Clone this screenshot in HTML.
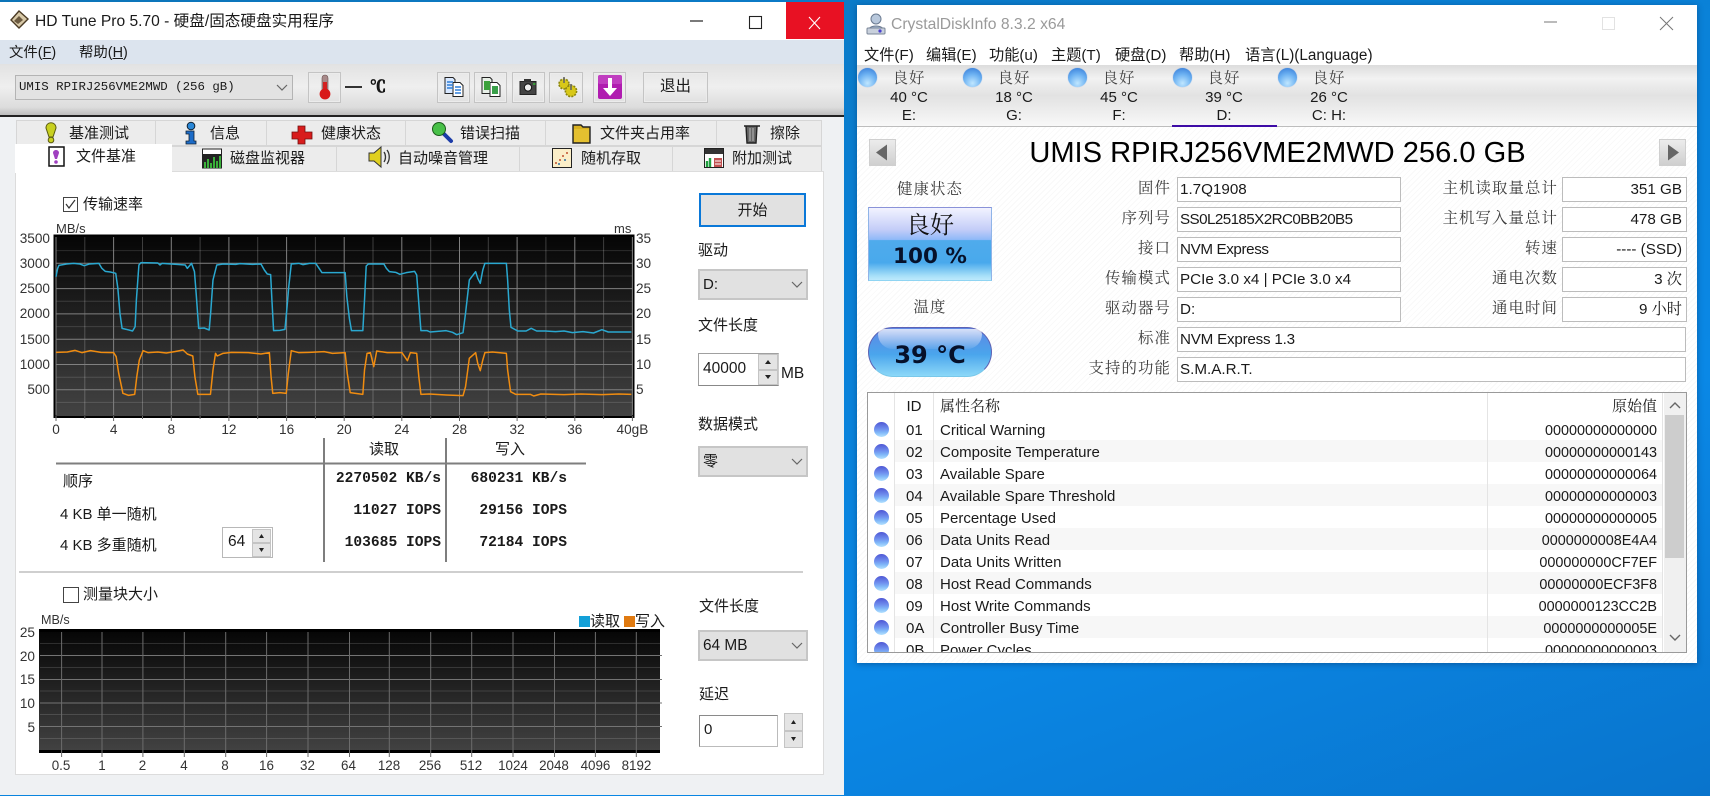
<!DOCTYPE html>
<html lang="zh"><head><meta charset="utf-8"><title>HD Tune Pro / CrystalDiskInfo</title>
<style>
html,body{margin:0;padding:0;width:1710px;height:796px;overflow:hidden}
body{position:relative;background:linear-gradient(160deg,#0c74b8 0%,#0a7fd2 35%,#0a88e6 70%,#0974cc 100%);font-family:"Liberation Sans","Noto Sans CJK SC",sans-serif;font-size:15px;color:#1a1a1a}
div,span.a,svg{position:absolute}
.t{position:absolute;white-space:nowrap;line-height:20px}
.c{position:absolute;white-space:nowrap;line-height:20px;text-align:center}
.r{position:absolute;white-space:nowrap;line-height:20px;text-align:right}
.m{font-family:"Liberation Mono",monospace;font-weight:bold;font-size:14.6px}
.s{font-family:"Liberation Sans","Noto Serif CJK SC",serif}
.tb{background:#ececec;border:1px solid #d6d6d6;box-sizing:border-box}
.bt{border:1px solid #c4c4c4;box-shadow:inset 0 0 0 1px #ececec;box-sizing:border-box}
.cb{background:#e1e1e1;border:2px solid #c6c6c6;box-sizing:border-box}
.sb{background:#e4e4e4;border:1px solid #c4c4c4;box-sizing:border-box}
.fb{background:#fff;border:1px solid #bcbcbc;box-sizing:border-box;height:25px}
.lb{color:#3c3c3c;letter-spacing:1.1px;font-size:15.4px}
.orb{width:19px;height:19px;border-radius:50%;background:radial-gradient(circle at 50% 80%,#bfe6ff 0,#6db2f2 50%,#2f74d4 100%);box-shadow:0 0 1px #7aa8e0}
.lo{left:874px;width:15px;height:15px;border-radius:50%;background:linear-gradient(#4f57d4,#6f8eee 45%,#7fb6f8 70%,#b4e2ff)}
.alt{left:894px;width:768px;height:22px;background:#f7f7f7}
</style></head><body>

<!-- HD Tune window -->
<div style="left:0;top:2px;width:844px;height:793px;background:#eff1f3"></div>
<div style="left:0;top:2px;width:844px;height:38px;background:#fff"></div>
<div style="left:786px;top:2px;width:58px;height:37px;background:#e81123"></div>
<svg style="left:0;top:0" width="860" height="60">
<path d="M19 11l9 8-9 9-8-8z" fill="#d8c9a8" stroke="#4a3a24" stroke-width="1.4"/><path d="M14 21l5-5 4 4-5 4z" fill="#6b5a40"/>
<path d="M690 21h13" stroke="#222" stroke-width="1.2"/>
<rect x="749.5" y="16.5" width="12" height="12" fill="none" stroke="#222" stroke-width="1.1"/>
<path d="M809 17l11 12M820 17l-11 12" stroke="#fff" stroke-width="1.1"/>
</svg>
<div class="t" style="left:35px;top:12px;font-size:15.6px">HD Tune Pro 5.70 - 硬盘/固态硬盘实用程序</div>
<div style="left:0;top:40px;width:844px;height:24px;background:#dce4ee"></div>
<div class="t" style="left:9px;top:43px;font-size:14.4px">文件(<u>F</u>)</div>
<div class="t" style="left:79px;top:43px;font-size:14.4px">帮助(<u>H</u>)</div>
<div style="left:0;top:64px;width:844px;height:51px;background:linear-gradient(#e2e2e2,#efefef 45%,#dcdcdc 85%,#bdbdbd)"></div>
<div style="left:0;top:115px;width:844px;height:1.5px;background:#222"></div>

<div style="left:15px;top:75px;width:278px;height:25px;background:#e2e2e2;border:1px solid #b4b4b4;box-sizing:border-box"></div>
<div class="t" style="left:19px;top:77px;font-family:'Liberation Mono',monospace;font-size:12.4px">UMIS RPIRJ256VME2MWD (256 gB)</div>
<svg style="left:276px;top:84px" width="12" height="8"><path d="M1 1l5 5 5-5" fill="none" stroke="#666" stroke-width="1.2"/></svg>

<div class="bt" style="left:308px;top:72px;width:33px;height:31px"></div>
<svg style="left:316px;top:73px" width="18" height="28"><rect x="6" y="2" width="6" height="18" rx="3" fill="#a88a8a" stroke="#6a5050" stroke-width=".6"/><rect x="7" y="9" width="4" height="12" fill="#d42020"/><circle cx="9" cy="21" r="5.4" fill="#d81818"/></svg>
<div style="left:345px;top:86px;width:17px;height:2px;background:#333"></div>
<div class="t" style="left:370px;top:76px;font-weight:bold;font-size:16px;font-family:'Noto Serif CJK SC',serif;-webkit-text-stroke:.7px #111">℃</div>

<div class="bt" style="left:437px;top:72px;width:33px;height:31px"></div>
<div class="bt" style="left:474px;top:72px;width:33px;height:31px"></div>
<div class="bt" style="left:512px;top:72px;width:33px;height:31px"></div>
<div class="bt" style="left:549px;top:72px;width:34px;height:31px"></div>
<div class="bt" style="left:593px;top:72px;width:33px;height:31px"></div>
<div class="bt" style="left:643px;top:72px;width:65px;height:31px"></div>
<div class="c" style="left:643px;top:77px;width:65px;font-size:15.5px">退出</div>
<svg style="left:436px;top:72px" width="200" height="32">
<g stroke="#222" stroke-width="1">
<path d="M9 5.5h8l2 2v14H9z" fill="#d8e8ff"/><path d="M17 10.5h7l3 3v11H17z" fill="#fff"/>
<path d="M11 10h6M11 13h6M11 16h6M19 15h6M19 18h6M19 21h6" stroke="#2f7fd8" stroke-width="1.5"/>
<path d="M46 5.5h8l2 2v14H46z" fill="#e8f0e8"/><path d="M54 10.5h7l3 3v11H54z" fill="#fff"/>
<rect x="48" y="9" width="6" height="9" fill="#3aa03a" stroke="none"/><rect x="56" y="14" width="6" height="8" fill="#3aa04a" stroke="none"/>
</g>
<path d="M84 9.5h16v13H84z" fill="#444" stroke="#222"/><rect x="88" y="7" width="7" height="3" fill="#333"/><circle cx="92" cy="15.5" r="3.6" fill="#eee" stroke="#111"/><rect x="97" y="11" width="2.5" height="2" fill="#3a9a3a"/>
<g fill="#d8c818" stroke="#8a8410" stroke-width="1.6" stroke-dasharray="2 1.2"><circle cx="128" cy="12" r="5"/><circle cx="135" cy="19" r="5.6"/></g><path d="M128 5v6M135 12v6" stroke="#666" stroke-width="1.6"/>
<rect x="162" y="3" width="24" height="24" rx="2" fill="#b01cb0"/><rect x="162" y="3" width="24" height="9" rx="2" fill="#cc55cc" opacity=".6"/><path d="M172 6h4v10h5l-7 8-7-8h5z" fill="#fff"/>
</svg>

<!-- tabs -->
<div class="tb" style="left:16px;top:120px;width:140px;height:26px"></div>
<div class="tb" style="left:155px;top:120px;width:112px;height:26px"></div>
<div class="tb" style="left:266px;top:120px;width:140px;height:26px"></div>
<div class="tb" style="left:405px;top:120px;width:141px;height:26px"></div>
<div class="tb" style="left:545px;top:120px;width:172px;height:26px"></div>
<div class="tb" style="left:716px;top:120px;width:106px;height:26px"></div>
<div class="tb" style="left:171px;top:146px;width:166px;height:26px"></div>
<div class="tb" style="left:336px;top:146px;width:184px;height:26px"></div>
<div class="tb" style="left:519px;top:146px;width:154px;height:26px"></div>
<div class="tb" style="left:672px;top:146px;width:150px;height:26px"></div>
<div style="left:15px;top:171px;width:809px;height:604px;background:#fff;border:1px solid #dcdcdc;box-sizing:border-box"></div>
<div style="left:15px;top:144px;width:157px;height:29px;background:#fff"></div>

<div class="t" style="left:69px;top:124px">基准测试</div>
<div class="t" style="left:210px;top:124px">信息</div>
<div class="t" style="left:321px;top:124px">健康状态</div>
<div class="t" style="left:460px;top:124px">错误扫描</div>
<div class="t" style="left:600px;top:124px">文件夹占用率</div>
<div class="t" style="left:770px;top:124px">擦除</div>
<div class="t" style="left:76px;top:147px">文件基准</div>
<div class="t" style="left:230px;top:149px">磁盘监视器</div>
<div class="t" style="left:398px;top:149px">自动噪音管理</div>
<div class="t" style="left:581px;top:149px">随机存取</div>
<div class="t" style="left:732px;top:149px">附加测试</div>

<svg style="left:0;top:116px" width="844" height="56">
<!-- bang -->
<path d="M46 12c0-7 10-7 10 0l-3 9h-4z" fill="#c8d020" stroke="#5a5a10"/><circle cx="51" cy="24" r="2.8" fill="#c8d020" stroke="#5a5a10"/>
<!-- i -->
<circle cx="191" cy="10" r="3.8" fill="#2a88d8" stroke="#123"/><path d="M186 15h8v10h2v3h-10v-3h3v-7h-3z" fill="#1c6cc8" stroke="#123" stroke-width=".8"/>
<!-- cross -->
<path d="M298 10h7v6h7v7h-7v5h-7v-5h-6v-7h6z" fill="#d81c1c" stroke="#701010" stroke-width=".8"/>
<!-- magnifier -->
<path d="M444 18l7 7" stroke="#1c3ca8" stroke-width="4" stroke-linecap="round"/><circle cx="439" cy="13" r="6.5" fill="#48c048" stroke="#1a5a1a"/>
<!-- folder -->
<path d="M573 12v-3h8l2 2h7v16h-17z" fill="#d8b020" stroke="#222" stroke-width="1.4"/><path d="M574 13h15v13h-15z" fill="#e4c030"/>
<!-- trash -->
<path d="M744 10h16M746 10l1 17h9l1-17" fill="#666" stroke="#222" stroke-width="1.4"/><path d="M750 12v13M753 12v13" stroke="#bbb"/>
<!-- active -->
<rect x="49" y="31" width="15" height="19" fill="#fff" stroke="#111" stroke-width="1.5"/><path d="M53 37c0-4 6-4 6 0l-2 6h-2z" fill="#a040c0"/><circle cx="56" cy="46" r="1.8" fill="#a040c0"/>
<!-- chart -->
<rect x="202.5" y="33" width="19" height="19" fill="#fff" stroke="#222"/><rect x="203" y="38" width="18" height="14" fill="#222"/><path d="M205 52v-6M208 52v-9M211 52v-5M214 52v-11M217 52v-7M220 52v-12" stroke="#3ab03a" stroke-width="2"/>
<!-- speaker -->
<path d="M369 37h5l7-6v20l-7-6h-5z" fill="#e0d020" stroke="#333"/><path d="M384 36c2 3 2 7 0 10M387 34c3 4 3 10 0 14" stroke="#333" stroke-width="1.3" fill="none"/>
<!-- random -->
<rect x="552.5" y="32.5" width="19" height="19" fill="#fbeec8" stroke="#222"/><g fill="#c05030"><circle cx="556" cy="47" r="1"/><circle cx="560" cy="44" r="1"/><circle cx="563" cy="40" r="1"/><circle cx="567" cy="37" r="1"/></g><g fill="#3070a0"><circle cx="559" cy="48" r="1"/><circle cx="565" cy="44" r="1"/></g>
<!-- additional -->
<rect x="704.5" y="32.5" width="19" height="19" fill="#fff" stroke="#222"/><rect x="705" y="33" width="18" height="5" fill="#333"/><path d="M707 51v-6M710 51v-9" stroke="#20a040" stroke-width="2.4"/><rect x="714" y="42" width="8" height="9" fill="#c05050"/><path d="M715 45h6M715 48h6" stroke="#fff"/>
</svg>

<!-- benchmark upper -->
<div style="left:63px;top:197px;width:15px;height:15px;box-sizing:border-box;background:#fff;border:1px solid #444"></div>
<svg style="left:63px;top:197px" width="15" height="15"><path d="M3 7l3 4 6-8" fill="none" stroke="#333" stroke-width="1.2"/></svg>
<div class="t" style="left:83px;top:195px">传输速率</div>

<svg style="left:0;top:0" width="850" height="796" font-family="Liberation Sans" font-size="13.6" fill="#333">
<defs><linearGradient id="g1" x1="0" y1="0" x2="0" y2="1"><stop offset="0" stop-color="#050505"/><stop offset="1" stop-color="#434343"/></linearGradient></defs>
<rect x="54.5" y="235.5" width="579" height="181.5" fill="url(#g1)" stroke="#000" stroke-width="2"/>
<path d="M56 250.6H633M56 276H633M56 301.2H633M56 326.6H633M56 351.8H633M56 377.2H633M56 402.4H633" stroke="#fff" stroke-opacity=".14"/>
<path d="M84.8 237V415M142.5 237V415M200.1 237V415M257.7 237V415M315.4 237V415M373 237V415M430.7 237V415M488.3 237V415M545.9 237V415M603.6 237V415" stroke="#fff" stroke-opacity=".22"/>
<path d="M56 263.3H633M56 288.6H633M56 313.9H633M56 339.2H633M56 364.5H633M56 389.8H633" stroke="#808080"/>
<path d="M56 237V415M113.6 237V415M171.3 237V415M228.9 237V415M286.6 237V415M344.2 237V415M401.8 237V415M459.5 237V415M517.1 237V415M574.8 237V415M632.4 237V415" stroke="#808080"/>
<path d="M56 416v5M113.6 416v5M171.3 416v5M228.9 416v5M286.6 416v5M344.2 416v5M401.8 416v5M459.5 416v5M517.1 416v5M574.8 416v5M632.4 416v5M84.8 416v3M142.5 416v3M200.1 416v3M257.7 416v3M315.4 416v3M373 416v3M430.7 416v3M488.3 416v3M545.9 416v3M603.6 416v3" stroke="#666"/>
<g text-anchor="end"><text x="50" y="243">3500</text><text x="50" y="268">3000</text><text x="50" y="293">2500</text><text x="50" y="318">2000</text><text x="50" y="344">1500</text><text x="50" y="369">1000</text><text x="50" y="394">500</text></g>
<g><text x="636" y="243">35</text><text x="636" y="268">30</text><text x="636" y="293">25</text><text x="636" y="318">20</text><text x="636" y="344">15</text><text x="636" y="369">10</text><text x="636" y="394">5</text></g>
<text x="56" y="233" font-size="13">MB/s</text><text x="614" y="233" font-size="13">ms</text>
<g text-anchor="middle"><text x="56" y="434">0</text><text x="113.6" y="434">4</text><text x="171.3" y="434">8</text><text x="228.9" y="434">12</text><text x="286.6" y="434">16</text><text x="344.2" y="434">20</text><text x="401.8" y="434">24</text><text x="459.5" y="434">28</text><text x="517.1" y="434">32</text><text x="574.8" y="434">36</text><text x="632.4" y="434">40gB</text></g>

<!-- chart 2 -->
<rect x="39" y="629.5" width="621" height="123.5" fill="url(#g1)"/>
<rect x="39" y="629" width="621" height="3" fill="#000"/><rect x="39" y="750" width="621" height="3" fill="#000"/>
<path d="M40 643.5H660M40 667.5H660M40 691H660M40 714.5H660M40 738.5H660" stroke="#fff" stroke-opacity=".14"/>
<path d="M40 655.5H662M40 679.5H662M40 703H662M40 726.5H662" stroke="#747474"/>
<path d="M61.6 632V757M102 632V757M142.9 632V757M184.3 632V757M225.7 632V757M266.6 632V757M308 632V757M349.5 632V757M389.3 632V757M430.7 632V757M471.7 632V757M513 632V757M554.5 632V757M595.4 632V757M636.3 632V757" stroke="#6c6c6c"/>
<g text-anchor="end"><text x="35" y="637">25</text><text x="35" y="661">20</text><text x="35" y="684">15</text><text x="35" y="708">10</text><text x="35" y="732">5</text></g>
<text x="41" y="624" font-size="12.6">MB/s</text>
<g text-anchor="middle" font-size="13.4"><text x="61" y="770">0.5</text><text x="102" y="770">1</text><text x="142.5" y="770">2</text><text x="184" y="770">4</text><text x="225" y="770">8</text><text x="266.5" y="770">16</text><text x="307.5" y="770">32</text><text x="348.5" y="770">64</text><text x="389" y="770">128</text><text x="430" y="770">256</text><text x="471" y="770">512</text><text x="513" y="770">1024</text><text x="554" y="770">2048</text><text x="595.5" y="770">4096</text><text x="636.5" y="770">8192</text></g>
<!-- table lines -->
<path d="M324 438V562M446 438V562" stroke="#7e7e7e" stroke-width="2"/>
<path d="M56 463.5H586" stroke="#7e7e7e" stroke-width="2"/>
<path d="M19 572H803" stroke="#cfcfcf" stroke-width="2"/>
</svg>

<svg style="left:0;top:200px" width="660" height="240" viewBox="0 0 1568 720" preserveAspectRatio="none" fill="none" stroke-linejoin="round">
<polyline vector-effect="non-scaling-stroke" stroke="#2aa8d0" stroke-width="1.5" points="133,230 137,205 140,196 150,194 158,192 175,190 190,192 200,197 212,192 235,190 242,205 250,214 262,216 275,220 280,265 285,340 290,385 300,388 315,393 321,380 324,300 330,195 335,188 375,189 380,195 385,190 420,193 440,195 445,205 455,190 462,215 466,280 472,385 485,384 497,390 501,330 506,240 515,195 530,192 560,193 570,191 600,193 620,192 628,210 635,222 643,224 646,300 650,392 665,391 677,388 682,320 686,260 692,192 710,190 720,194 735,190 750,190 758,205 765,218 790,218 820,218 824,290 830,355 835,392 862,392 866,300 870,198 875,192 912,192 918,205 925,215 940,217 950,223 965,218 985,214 990,225 995,310 1000,392 1015,392 1022,396 1060,392 1075,397 1085,404 1100,398 1106,340 1115,240 1130,215 1135,235 1141,250 1147,210 1152,190 1203,190 1206,240 1210,330 1214,382 1230,393 1250,393 1262,385 1275,393 1295,393 1320,395 1340,393 1360,398 1385,395 1410,399 1430,389 1445,396 1500,396"/>
<polyline vector-effect="non-scaling-stroke" stroke="#f08c10" stroke-width="1.5" points="133,457 160,456 178,451 195,458 215,452 240,457 270,458 276,470 282,520 292,580 305,586 320,583 325,530 331,480 340,452 352,458 375,456 395,459 415,455 435,450 445,462 458,468 463,530 470,583 500,583 506,510 512,460 516,468 530,460 550,457 590,458 620,462 640,458 644,530 648,580 665,578 680,580 685,520 692,452 710,458 735,457 770,455 790,460 820,458 825,520 832,578 862,583 866,510 872,460 880,458 888,500 895,453 920,458 955,458 968,482 975,458 990,460 995,530 1000,583 1020,582 1060,585 1100,587 1106,560 1115,475 1130,458 1135,490 1141,512 1147,480 1152,458 1170,456 1203,460 1206,510 1213,575 1225,583 1260,583 1268,588 1285,582 1340,584 1380,582 1430,584 1470,582 1500,583"/>
</svg>

<!-- results -->
<div class="c" style="left:364px;top:440px;width:40px">读取</div>
<div class="c" style="left:490px;top:440px;width:40px">写入</div>
<div class="t" style="left:63px;top:472px">顺序</div>
<div class="t" style="left:60px;top:505px">4 KB 单一随机</div>
<div class="t" style="left:60px;top:536px">4 KB 多重随机</div>
<div class="r m" style="right:1269px;top:469px">2270502 KB/s</div>
<div class="r m" style="right:1143px;top:469px">680231 KB/s</div>
<div class="r m" style="right:1269px;top:501px">11027 IOPS</div>
<div class="r m" style="right:1143px;top:501px">29156 IOPS</div>
<div class="r m" style="right:1269px;top:533px">103685 IOPS</div>
<div class="r m" style="right:1143px;top:533px">72184 IOPS</div>
<div style="left:222px;top:527px;width:51px;height:31px;background:#fff;border:1px solid #b8b8b8;box-sizing:border-box"></div>
<div class="t" style="left:228px;top:532px;font-size:15.5px">64</div>
<div class="sb" style="left:252px;top:529px;width:19px;height:14px"></div>
<div class="sb" style="left:252px;top:543px;width:19px;height:14px"></div>
<svg style="left:252px;top:529px" width="19" height="28"><path d="M7 9l2.5-4 2.5 4zM7 19l2.5 4 2.5-4z" fill="#222"/></svg>

<div style="left:63px;top:587px;width:16px;height:16px;box-sizing:border-box;background:#fff;border:1px solid #444"></div>
<div class="t" style="left:83px;top:585px">测量块大小</div>
<div style="left:579px;top:616px;width:11px;height:11px;background:#13a0d8"></div>
<div class="t" style="left:590px;top:612px">读取</div>
<div style="left:624px;top:616px;width:11px;height:11px;background:#e07a10"></div>
<div class="t" style="left:635px;top:612px">写入</div>

<!-- right column -->
<div style="left:699px;top:193px;width:107px;height:34px;background:#e1e1e1;border:2px solid #0a78d8;box-sizing:border-box"></div>
<div class="c" style="left:699px;top:201px;width:107px">开始</div>
<div class="t" style="left:698px;top:241px">驱动</div>
<div class="cb" style="left:698px;top:269px;width:110px;height:31px"></div>
<div class="t" style="left:703px;top:275px;font-size:15px">D:</div>
<div class="t" style="left:698px;top:316px">文件长度</div>
<div style="left:698px;top:353px;width:81px;height:33px;background:#fff;border:1px solid #a0a0a0;border-right-color:#ccc;border-bottom-color:#888;box-sizing:border-box"></div>
<div class="t" style="left:703px;top:359px;font-size:15.5px">40000</div>
<div class="sb" style="left:758px;top:354px;width:20px;height:16px"></div>
<div class="sb" style="left:758px;top:370px;width:20px;height:15px"></div>
<svg style="left:758px;top:354px" width="20" height="31"><path d="M7 10l3-4 3 4zM7 21l3 4 3-4z" fill="#222"/></svg>
<div class="t" style="left:781px;top:364px;font-size:15.5px">MB</div>
<div class="t" style="left:698px;top:415px">数据模式</div>
<div class="cb" style="left:698px;top:446px;width:110px;height:31px"></div>
<div class="t" style="left:703px;top:452px">零</div>
<div class="t" style="left:699px;top:597px">文件长度</div>
<div class="cb" style="left:698px;top:630px;width:110px;height:31px"></div>
<div class="t" style="left:703px;top:636px;font-size:15.4px">64 MB</div>
<div class="t" style="left:699px;top:685px">延迟</div>
<div style="left:699px;top:715px;width:79px;height:32px;background:#fff;border:1px solid #8a8a8a;border-bottom-color:#bbb;border-right-color:#bbb;box-sizing:border-box"></div>
<div class="t" style="left:704px;top:720px;font-size:15px">0</div>
<div class="sb" style="left:784px;top:713px;width:19px;height:18px"></div>
<div class="sb" style="left:784px;top:731px;width:19px;height:17px"></div>
<svg style="left:784px;top:713px" width="19" height="35"><path d="M7 11l2.5-4 2.5 4zM7 24l2.5 4 2.5-4z" fill="#222"/></svg>
<svg style="left:787px;top:0" width="20" height="500"><g fill="none" stroke="#666" stroke-width="1.2"><path d="M5 282l5 5 5-5M5 459l5 5 5-5"/></g></svg>
<svg style="left:787px;top:640px" width="20" height="20"><path d="M5 3l5 5 5-5" fill="none" stroke="#666" stroke-width="1.2"/></svg>

<!-- CrystalDiskInfo window -->
<div style="left:857px;top:5px;width:840px;height:658px;background:repeating-linear-gradient(135deg,#fff 0 3px,#f9f9f9 3px 4px);box-shadow:0 1px 6px rgba(0,30,70,.4)"></div>
<div style="left:857px;top:5px;width:840px;height:60px;background:#fff"></div>
<svg style="left:864px;top:12px" width="24" height="24"><circle cx="12" cy="7" r="5" fill="#b8c8dc" stroke="#6a7a90"/><path d="M3 20c1-8 17-8 18 0z" fill="#a8bcd4" stroke="#6a7a90"/><rect x="3" y="16" width="18" height="6" rx="1" fill="#c8d0dc" stroke="#7a8698"/><circle cx="16" cy="19" r="1.6" fill="#4a40d0"/></svg>
<div class="t" style="left:891px;top:15px;color:#9a9a9a;font-size:15.7px">CrystalDiskInfo 8.3.2 x64</div>
<svg style="left:1540px;top:12px" width="140" height="22">
<path d="M4 10h13" stroke="#777"/><rect x="62.5" y="5.5" width="12" height="12" fill="none" stroke="#e2e2e2"/>
<path d="M120 5l13 13M133 5l-13 13" stroke="#777"/>
</svg>
<div class="t" style="left:864px;top:46px;font-size:15.2px">文件(F)</div>
<div class="t" style="left:926px;top:46px;font-size:15.2px">编辑(E)</div>
<div class="t" style="left:989px;top:46px;font-size:15.2px">功能(u)</div>
<div class="t" style="left:1051px;top:46px;font-size:15.2px">主题(T)</div>
<div class="t" style="left:1115px;top:46px;font-size:15.2px">硬盘(D)</div>
<div class="t" style="left:1179px;top:46px;font-size:15.2px">帮助(H)</div>
<div class="t" style="left:1245px;top:46px;font-size:15.3px">语言(L)(Language)</div>

<div style="left:857px;top:65px;width:840px;height:61px;background:linear-gradient(#dcdcdc,#f2f2f2 22%,#e2e2e2 50%,#f8f8f8 100%);border-bottom:1.5px solid #bdbdbd;box-sizing:content-box"></div>
<div style="left:1172px;top:125px;width:105px;height:2px;background:#3e0ca6"></div>
<div class="orb" style="left:858px;top:68px"></div>
<div class="orb" style="left:963px;top:68px"></div>
<div class="orb" style="left:1068px;top:68px"></div>
<div class="orb" style="left:1173px;top:68px"></div>
<div class="orb" style="left:1278px;top:68px"></div>
<div class="c s" style="left:869px;top:69px;width:80px;color:#444;letter-spacing:1px;font-size:15.4px">良好</div>
<div class="c s" style="left:974px;top:69px;width:80px;color:#444;letter-spacing:1px;font-size:15.4px">良好</div>
<div class="c s" style="left:1079px;top:69px;width:80px;color:#444;letter-spacing:1px;font-size:15.4px">良好</div>
<div class="c s" style="left:1184px;top:69px;width:80px;color:#444;letter-spacing:1px;font-size:15.4px">良好</div>
<div class="c s" style="left:1289px;top:69px;width:80px;color:#444;letter-spacing:1px;font-size:15.4px">良好</div>
<div class="c" style="left:869px;top:88px;width:80px">40 °C</div>
<div class="c" style="left:974px;top:88px;width:80px">18 °C</div>
<div class="c" style="left:1079px;top:88px;width:80px">45 °C</div>
<div class="c" style="left:1184px;top:88px;width:80px">39 °C</div>
<div class="c" style="left:1289px;top:88px;width:80px">26 °C</div>
<div class="c" style="left:869px;top:106px;width:80px">E:</div>
<div class="c" style="left:974px;top:106px;width:80px">G:</div>
<div class="c" style="left:1079px;top:106px;width:80px">F:</div>
<div class="c" style="left:1184px;top:106px;width:80px">D:</div>
<div class="c" style="left:1289px;top:106px;width:80px">C: H:</div>

<div class="c" style="left:1000px;top:135px;width:555px;line-height:36px;font-size:29.1px;color:#000">UMIS RPIRJ256VME2MWD 256.0 GB</div>
<div style="left:869px;top:139px;width:27px;height:27px;background:linear-gradient(#ececec,#cfcfcf);border:1px solid #cfcfcf;box-sizing:border-box"></div>
<div style="left:1659px;top:139px;width:27px;height:27px;background:linear-gradient(#ececec,#cfcfcf);border:1px solid #cfcfcf;box-sizing:border-box"></div>
<svg style="left:869px;top:139px" width="27" height="27"><path d="M7 13.5l11-8v16z" fill="#666"/></svg>
<svg style="left:1659px;top:139px" width="27" height="27"><path d="M20 13.5l-11-8v16z" fill="#666"/></svg>

<div class="c s lb" style="left:880px;top:180px;width:100px">健康状态</div>
<div style="left:868px;top:207px;width:124px;height:74px;box-sizing:border-box;border:1.5px solid #8a92d8;border-bottom-color:#8fd4f2;border-left-color:#8fb4e8;border-right-color:#8fb4e8;background:linear-gradient(#f2f3ff 0%,#c4cdf8 30%,#8fb9f8 44%,#4fabec 45%,#49a9ec 76%,#a6dff8 94%,#bdeafc 100%)"></div>
<div class="c s" style="left:868px;top:211px;width:124px;font-size:24px;line-height:30px;color:#111">良好</div>
<div class="c" style="left:868px;top:242px;width:124px;font-family:'DejaVu Sans',sans-serif;font-weight:bold;font-size:21.5px;line-height:30px;color:#06112a">100 %</div>
<div class="c s lb" style="left:880px;top:298px;width:100px">温度</div>
<div style="left:868px;top:327px;width:124px;height:50px;border-radius:25px;box-sizing:border-box;border:1.5px solid #5d62b4;border-bottom-color:#79c8ea;background:linear-gradient(#5f86e4,#4aa5ec 55%,#8cd8f8)"></div>
<div style="left:878px;top:329px;width:104px;height:20px;border-radius:14px 14px 40px 40px;background:linear-gradient(rgba(255,255,255,.75),rgba(255,255,255,.08))"></div>
<div class="c" style="left:868px;top:339px;width:124px;font-family:'DejaVu Sans',sans-serif;font-weight:bold;font-size:24px;line-height:32px;color:#06112a">39 °C</div>

<div class="r s lb" style="right:539px;top:179px">固件</div>
<div class="r s lb" style="right:539px;top:209px">序列号</div>
<div class="r s lb" style="right:539px;top:239px">接口</div>
<div class="r s lb" style="right:539px;top:269px">传输模式</div>
<div class="r s lb" style="right:539px;top:299px">驱动器号</div>
<div class="r s lb" style="right:539px;top:329px">标准</div>
<div class="r s lb" style="right:539px;top:359px">支持的功能</div>
<div class="fb" style="left:1177px;top:177px;width:224px"></div>
<div class="fb" style="left:1177px;top:207px;width:224px"></div>
<div class="fb" style="left:1177px;top:237px;width:224px"></div>
<div class="fb" style="left:1177px;top:267px;width:224px"></div>
<div class="fb" style="left:1177px;top:297px;width:224px"></div>
<div class="fb" style="left:1177px;top:327px;width:509px"></div>
<div class="fb" style="left:1177px;top:357px;width:509px"></div>
<div class="t" style="left:1180px;top:180px;font-size:15.2px">1.7Q1908</div>
<div class="t" style="left:1180px;top:210px;font-size:15.2px;letter-spacing:-.58px">SS0L25185X2RC0BB20B5</div>
<div class="t" style="left:1180px;top:240px;font-size:15.2px;letter-spacing:-.38px">NVM Express</div>
<div class="t" style="left:1180px;top:270px;font-size:15.2px">PCIe 3.0 x4 | PCIe 3.0 x4</div>
<div class="t" style="left:1180px;top:300px;font-size:15.2px">D:</div>
<div class="t" style="left:1180px;top:330px;font-size:15.2px;letter-spacing:-.22px">NVM Express 1.3</div>
<div class="t" style="left:1180px;top:360px;font-size:15.2px">S.M.A.R.T.</div>

<div class="r s lb" style="right:152px;top:179px">主机读取量总计</div>
<div class="r s lb" style="right:152px;top:209px">主机写入量总计</div>
<div class="r s lb" style="right:152px;top:239px">转速</div>
<div class="r s lb" style="right:152px;top:269px">通电次数</div>
<div class="r s lb" style="right:152px;top:299px">通电时间</div>
<div class="fb" style="left:1562px;top:177px;width:125px"></div>
<div class="fb" style="left:1562px;top:207px;width:125px"></div>
<div class="fb" style="left:1562px;top:237px;width:125px"></div>
<div class="fb" style="left:1562px;top:267px;width:125px"></div>
<div class="fb" style="left:1562px;top:297px;width:125px"></div>
<div class="r" style="right:28px;top:180px;font-size:15.2px">351 GB</div>
<div class="r" style="right:28px;top:210px;font-size:15.2px">478 GB</div>
<div class="r" style="right:28px;top:240px;font-size:15.2px">---- (SSD)</div>
<div class="r s" style="right:28px;top:270px;font-size:15.2px">3 次</div>
<div class="r s" style="right:28px;top:300px;font-size:15.2px">9 小时</div>

<!-- list -->
<div style="left:867px;top:392px;width:820px;height:261px;background:#fff;border:1px solid #9a9a9a;box-sizing:border-box;overflow:hidden"></div>
<div style="left:868px;top:393px;width:818px;height:259px;overflow:hidden">
 <div class="alt" style="left:26px;top:47px"></div>
 <div class="alt" style="left:26px;top:91px"></div>
 <div class="alt" style="left:26px;top:135px"></div>
 <div class="alt" style="left:26px;top:179px"></div>
 <div class="alt" style="left:26px;top:223px"></div>
 <div style="left:26px;top:0;width:1px;height:259px;background:#e4e4e4"></div>
 <div style="left:65px;top:0;width:1px;height:259px;background:#e4e4e4"></div>
 <div style="left:619px;top:0;width:1px;height:259px;background:#e4e4e4"></div>
 <div style="left:794px;top:0;width:1px;height:259px;background:#e4e4e4"></div>
 <div class="s" style="left:38px;top:4px;line-height:20px;width:16px;text-align:center">ID</div>
 <div class="t s" style="left:72px;top:4px">属性名称</div>
 <div class="r s" style="right:29px;top:4px">原始值</div>

 <div class="lo" style="left:6px;top:29px"></div><div class="lo" style="left:6px;top:51px"></div><div class="lo" style="left:6px;top:73px"></div><div class="lo" style="left:6px;top:95px"></div><div class="lo" style="left:6px;top:117px"></div><div class="lo" style="left:6px;top:139px"></div><div class="lo" style="left:6px;top:161px"></div><div class="lo" style="left:6px;top:183px"></div><div class="lo" style="left:6px;top:205px"></div><div class="lo" style="left:6px;top:227px"></div><div class="lo" style="left:6px;top:249px"></div>

 <div class="t" style="left:38px;top:28px">01</div><div class="t" style="left:72px;top:28px">Critical Warning</div><div class="r" style="right:29px;top:28px;font-size:14.4px">00000000000000</div>
 <div class="t" style="left:38px;top:50px">02</div><div class="t" style="left:72px;top:50px">Composite Temperature</div><div class="r" style="right:29px;top:50px;font-size:14.4px">00000000000143</div>
 <div class="t" style="left:38px;top:72px">03</div><div class="t" style="left:72px;top:72px">Available Spare</div><div class="r" style="right:29px;top:72px;font-size:14.4px">00000000000064</div>
 <div class="t" style="left:38px;top:94px">04</div><div class="t" style="left:72px;top:94px">Available Spare Threshold</div><div class="r" style="right:29px;top:94px;font-size:14.4px">00000000000003</div>
 <div class="t" style="left:38px;top:116px">05</div><div class="t" style="left:72px;top:116px">Percentage Used</div><div class="r" style="right:29px;top:116px;font-size:14.4px">00000000000005</div>
 <div class="t" style="left:38px;top:138px">06</div><div class="t" style="left:72px;top:138px">Data Units Read</div><div class="r" style="right:29px;top:138px;font-size:14.4px">0000000008E4A4</div>
 <div class="t" style="left:38px;top:160px">07</div><div class="t" style="left:72px;top:160px">Data Units Written</div><div class="r" style="right:29px;top:160px;font-size:14.4px">000000000CF7EF</div>
 <div class="t" style="left:38px;top:182px">08</div><div class="t" style="left:72px;top:182px">Host Read Commands</div><div class="r" style="right:29px;top:182px;font-size:14.4px">00000000ECF3F8</div>
 <div class="t" style="left:38px;top:204px">09</div><div class="t" style="left:72px;top:204px">Host Write Commands</div><div class="r" style="right:29px;top:204px;font-size:14.4px">0000000123CC2B</div>
 <div class="t" style="left:38px;top:226px">0A</div><div class="t" style="left:72px;top:226px">Controller Busy Time</div><div class="r" style="right:29px;top:226px;font-size:14.4px">0000000000005E</div>
 <div class="t" style="left:38px;top:248px">0B</div><div class="t" style="left:72px;top:248px">Power Cycles</div><div class="r" style="right:29px;top:248px;font-size:14.4px">00000000000003</div>

 <div style="left:796px;top:0;width:22px;height:259px;background:#f0f0f0"></div>
 <div style="left:797px;top:22px;width:19px;height:143px;background:#cdcdcd"></div>
 <svg style="left:796px;top:0" width="22" height="259"><path d="M6 15l5-5 5 5M6 242l5 5 5-5" fill="none" stroke="#666" stroke-width="1.4"/></svg>
</div>
</body></html>
